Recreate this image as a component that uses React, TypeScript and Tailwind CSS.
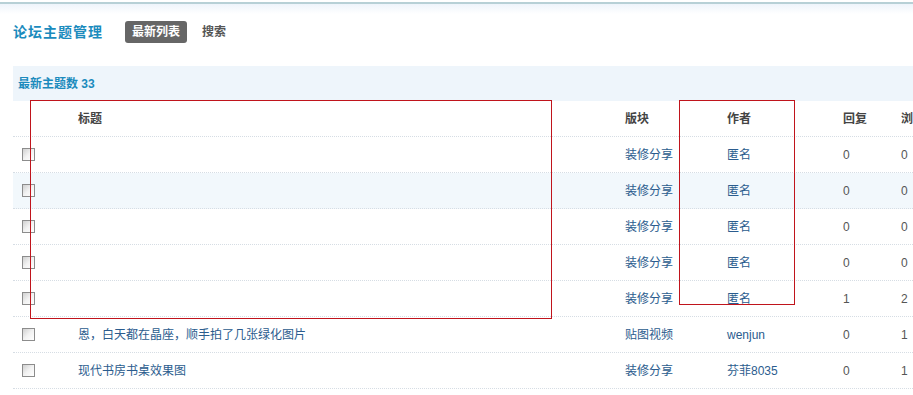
const rows = [
  { title: '', forum: '装修分享', author: '匿名', reply: '0', view: '0' },
  { title: '', forum: '装修分享', author: '匿名', reply: '0', view: '0' },
  { title: '', forum: '装修分享', author: '匿名', reply: '0', view: '0' },
  { title: '', forum: '装修分享', author: '匿名', reply: '0', view: '0' },
  { title: '', forum: '装修分享', author: '匿名', reply: '1', view: '2' },
  { title: '恩，白天都在晶座，顺手拍了几张绿化图片', forum: '贴图视频', author: 'wenjun', reply: '0', view: '1' },
  { title: '现代书房书桌效果图', forum: '装修分享', author: '芬菲8035', reply: '0', view: '1' },
]

const cols = 'grid grid-cols-[65px_547px_102px_116px_58px_1fr] items-center whitespace-nowrap'

function Checkbox() {
  return (
    <span className="ml-[9px] block h-[13px] w-[13px] border border-[#8c8c8c] bg-gradient-to-br from-[#d0d0d0] via-[#f2f2f2] to-[#ffffff]" />
  )
}

export default function App() {
  return (
    <div
      className="relative h-[395px] w-[913px] overflow-hidden bg-white text-[12px] text-[#555]"
      style={{ fontFamily: '"Liberation Sans", Verdana, "Noto Sans CJK SC", sans-serif' }}
    >
      <div className="h-[2px] bg-white" />
      <div className="h-[2px] bg-[#b7d0d6]" />
      <div className="h-[10px] bg-gradient-to-b from-[#eef4fb] to-white" />

      <div className="flex items-center pl-[13px] pt-[7px]">
        <h1 className="text-[14px] font-bold tracking-[1px] text-[#1b8bbd]">论坛主题管理</h1>
        <span className="ml-[22px] rounded-[3px] bg-[#666] px-[7px] py-[2px] font-bold text-white">最新列表</span>
        <span className="ml-[15px] font-bold text-[#555]">搜索</span>
      </div>

      <div className="ml-[13px] mt-[23px]">
        <div className="flex h-[35px] items-center bg-[#eef5fb] pl-[5px] font-bold text-[#1b8bbd]">
          最新主题数 33
        </div>
        <div className={`${cols} h-[36px] border-b border-dotted border-[#d6dde4] font-bold text-[#444]`}>
          <span />
          <span>标题</span>
          <span>版块</span>
          <span>作者</span>
          <span>回复</span>
          <span>浏览</span>
        </div>
        {rows.map((r, i) => (
          <div
            key={i}
            className={`${cols} h-[36px] border-b border-dotted border-[#d6dde4] ${i === 1 ? 'bg-[#f2f8fc]' : ''}`}
          >
            <Checkbox />
            <span className="text-[#2b5c8e]">{r.title}</span>
            <span className="text-[#2b5c8e]">{r.forum}</span>
            <span className="text-[#2b5c8e]">{r.author}</span>
            <span>{r.reply}</span>
            <span>{r.view}</span>
          </div>
        ))}
      </div>

      <div className="absolute left-[30px] top-[100px] h-[219px] w-[522px] border border-[#c0141c]" />
      <div className="absolute left-[679px] top-[100px] h-[205px] w-[116px] border border-[#c0141c]" />
    </div>
  )
}
